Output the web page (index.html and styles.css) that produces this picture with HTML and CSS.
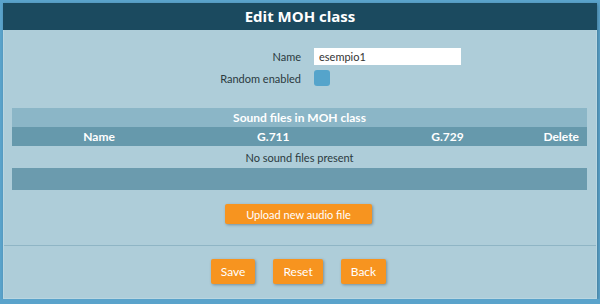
FILE: index.html
```html
<!DOCTYPE html>
<html lang="it">
<head>
	<meta charset="UTF-8">
	<title>Edit MOH class</title>
	<link rel="stylesheet" href="styles.css">
</head>
<body>
	<div class="dialog">
		<div class="dialog-title">Edit MOH class</div>

		<div class="dialog-body">
			<!-- form -->
			<div class="form">
				<label class="form-label" for="name">Name</label>
				<input class="form-input" id="name" type="text" value="esempio1">
				<span class="form-label">Random enabled</span>
				<span class="checkbox"></span>
			</div>

			<!-- sound files -->
			<table class="files">
				<colgroup>
					<col class="col">
					<col class="col">
					<col class="col">
					<col class="col-del">
				</colgroup>
				<thead>
					<tr><th class="files-title" colspan="4">Sound files in MOH class</th></tr>
					<tr class="files-head">
						<th>Name</th>
						<th>G.711</th>
						<th>G.729</th>
						<th class="th-del">Delete</th>
					</tr>
				</thead>
				<tbody>
					<tr><td class="files-empty" colspan="4">No sound files present</td></tr>
					<tr><td class="files-foot" colspan="4"></td></tr>
				</tbody>
			</table>

			<div class="upload">
				<button class="btn btn-upload">Upload new audio file</button>
			</div>
		</div>

		<div class="dialog-buttons">
			<button class="btn">Save</button>
			<button class="btn">Reset</button>
			<button class="btn">Back</button>
		</div>
	</div>
</body>
</html>
```

FILE: styles.css
```css
html,
body {
	margin: 0;
	padding: 0;
}

body {
	background: #5aa3cb;
	padding: 3px 3px 0 3px;
	font-family: Lato, "Open Sans", sans-serif;
	font-size: 11px;
	color: #2b3a40;
}

* {
	box-sizing: border-box;
}

/* dialog */
.dialog {
	width: 594px;
	height: 296px;
	background: #aecdd9;
	border: 1px solid #b9d6e1;
	border-top: none;
	box-shadow: 1px 1px 3px rgba(0, 0, 0, 0.25);
	display: flex;
	flex-direction: column;
}

.dialog-title {
	height: 27px;
	line-height: 26px;
	margin: 0 -1px;
	background: #1b4a5f;
	color: #fff;
	font-family: "Open Sans", sans-serif;
	font-weight: bold;
	font-size: 15px;
	text-align: center;
}

.dialog-body {
	padding: 18px 9px 0 8px;
	border-bottom: 1px solid #8fb5c5;
	height: 216px;
}

/* form */
.form {
	display: grid;
	grid-template-columns: 289px 147px;
	column-gap: 13px;
	row-gap: 5px;
	align-items: center;
}

.form-label {
	text-align: right;
}

.form-input {
	height: 17px;
	border: none;
	padding: 0 5px;
	font-family: inherit;
	font-size: 11px;
	color: #333;
	background: #fff;
	outline: none;
}

.checkbox {
	display: block;
	width: 16px;
	height: 16px;
	border-radius: 3px;
	background: #55a4cb;
}

/* table */
.files {
	width: 575px;
	margin-top: 22px;
	border-collapse: collapse;
	table-layout: fixed;
}

.files th,
.files td {
	padding: 0;
}

.col {
	width: 30.3%;
}

.col-del {
	width: 9.1%;
}

.files-title {
	height: 19px;
	background: #8bb6c7;
	color: #fff;
	font-weight: bold;
	font-size: 12px;
}

.files-head {
	height: 19px;
	background: #6699ac;
	color: #fff;
	font-size: 12px;
}

.th-del {
	text-align: right;
	padding-right: 8px !important;
}

.files-empty {
	height: 22px;
	text-align: center;
}

.files-foot {
	height: 22px;
	background: #6b9bae;
}

/* buttons */
.upload {
	text-align: center;
	margin-top: 14px;
	padding-right: 2px;
}

.btn {
	background: #f7941f;
	border: none;
	border-radius: 2px;
	color: #fff;
	font-family: inherit;
	font-size: 12px;
	height: 25px;
	padding: 0 10px;
	box-shadow: 1px 1px 3px rgba(0, 0, 0, 0.3);
	cursor: pointer;
}

.btn-upload {
	width: 147px;
	height: 20px;
	padding: 0;
	font-size: 11px;
}

.dialog-buttons {
	display: flex;
	justify-content: center;
	gap: 18px;
	padding-top: 13px;
	padding-right: 3px;
}
```
